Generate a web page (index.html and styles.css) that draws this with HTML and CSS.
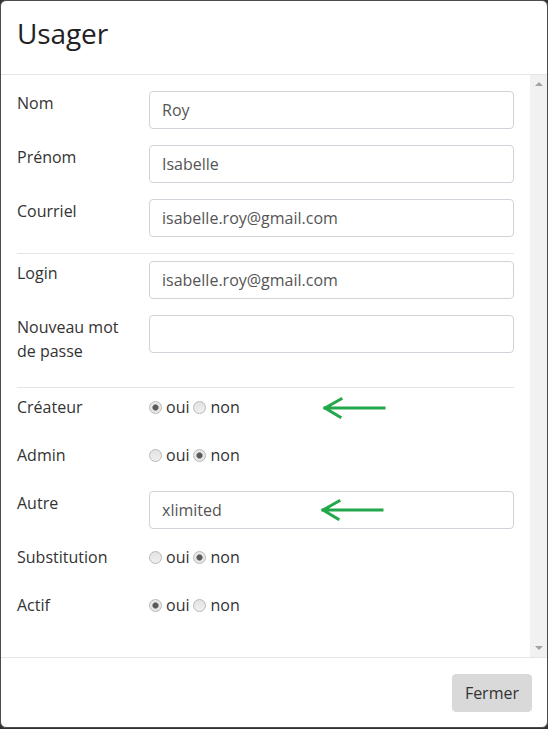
FILE: index.html
```html
<!DOCTYPE html>
<html lang="fr">
<head>
<meta charset="utf-8">
<title>Usager</title>
<link rel="stylesheet" href="styles.css">
</head>
<body>
<div class="modal">
  <div class="modal-header">
    <h4 class="modal-title">Usager</h4>
  </div>
  <div class="modal-main">
    <div class="modal-body">
      <form class="user-form">
        <div class="form-group">
          <label class="form-label">Nom</label>
          <input class="form-control" type="text" value="Roy">
        </div>
        <div class="form-group">
          <label class="form-label">Prénom</label>
          <input class="form-control" type="text" value="Isabelle">
        </div>
        <div class="form-group">
          <label class="form-label">Courriel</label>
          <input class="form-control" type="text" value="isabelle.roy@gmail.com">
        </div>
        <hr class="sep">
        <div class="form-group">
          <label class="form-label">Login</label>
          <input class="form-control" type="text" value="isabelle.roy@gmail.com">
        </div>
        <div class="form-group">
          <label class="form-label">Nouveau mot de passe</label>
          <input class="form-control" type="password" value="">
        </div>
        <hr class="sep sep-wide">
        <div class="form-group radio-row">
          <span class="form-label">Créateur</span>
          <div class="radios">
            <input class="radio" type="radio" name="createur" checked><span class="radio-text">oui</span>
            <input class="radio" type="radio" name="createur"><span class="radio-text">non</span>
          </div>
        </div>
        <div class="form-group radio-row">
          <span class="form-label">Admin</span>
          <div class="radios">
            <input class="radio" type="radio" name="admin"><span class="radio-text">oui</span>
            <input class="radio" type="radio" name="admin" checked><span class="radio-text">non</span>
          </div>
        </div>
        <div class="form-group">
          <label class="form-label">Autre</label>
          <input class="form-control" type="text" value="xlimited">
        </div>
        <div class="form-group radio-row">
          <span class="form-label">Substitution</span>
          <div class="radios">
            <input class="radio" type="radio" name="subst"><span class="radio-text">oui</span>
            <input class="radio" type="radio" name="subst" checked><span class="radio-text">non</span>
          </div>
        </div>
        <div class="form-group radio-row">
          <span class="form-label">Actif</span>
          <div class="radios">
            <input class="radio" type="radio" name="actif" checked><span class="radio-text">oui</span>
            <input class="radio" type="radio" name="actif"><span class="radio-text">non</span>
          </div>
        </div>
      </form>
    </div>
    <div class="scrollbar" aria-hidden="true">
      <span class="scroll-btn"><svg width="8" height="5" viewBox="0 0 8 5"><path d="M0 5 L4 1 L8 5 Z" fill="#a3a3a3"/></svg></span>
      <span class="scroll-btn"><svg width="8" height="5" viewBox="0 0 8 5"><path d="M0 0 L8 0 L4 4 Z" fill="#a3a3a3"/></svg></span>
    </div>
  </div>
  <div class="modal-footer">
    <button class="btn" type="button">Fermer</button>
  </div>
  <svg class="annot annot-1" width="64" height="22" viewBox="0 0 64 22">
    <path d="M3 11 H62 M3 11 L19 2 M3 11 L18 20" fill="none" stroke="#22a84a" stroke-width="3" stroke-linecap="square"/>
  </svg>
  <svg class="annot annot-2" width="64" height="22" viewBox="0 0 64 22">
    <path d="M3 11 H62 M3 11 L19 2 M3 11 L18 20" fill="none" stroke="#22a84a" stroke-width="3" stroke-linecap="square"/>
  </svg>
</div>
</body>
</html>
```

FILE: styles.css
```css
* {
  box-sizing: border-box;
}

html, body {
  margin: 0;
  padding: 0;
}

body {
  background: #2f3133;
  font-family: "Open Sans", "Liberation Sans", sans-serif;
  font-size: 16px;
  line-height: 24px;
  color: #333;
  width: 548px;
  height: 729px;
  overflow: hidden;
}

.modal {
  position: relative;
  width: 548px;
  height: 728px;
  background: #fff;
  border: 1px solid #4a4b4c;
  border-radius: 6px;
  display: flex;
  flex-direction: column;
  overflow: hidden;
}

.modal-header {
  flex: none;
  height: 74px;
  padding: 11px 16px 0;
  border-bottom: 1px solid #e5e5e5;
}

.modal-title {
  margin: 0;
  font-size: 28px;
  line-height: 42px;
  font-weight: 400;
  color: #222;
  letter-spacing: -0.1px;
}

.modal-main {
  flex: 1;
  min-height: 0;
  display: flex;
}

.modal-body {
  flex: 1;
  min-width: 0;
  overflow: hidden;
  padding: 16px 16px 16px 16px;
}

.scrollbar {
  flex: none;
  width: 17px;
  background: #f1f1f1;
  display: flex;
  flex-direction: column;
  justify-content: space-between;
}

.scroll-btn {
  height: 17px;
  display: flex;
  align-items: center;
  justify-content: center;
}

.scroll-btn svg {
  display: block;
}

.user-form {
  margin: 0;
}

.form-group {
  display: flex;
  align-items: flex-start;
  margin-bottom: 16px;
}

.form-label {
  flex: none;
  width: 132px;
  padding-right: 15px;
  display: block;
  line-height: 24px;
  color: #333;
}

.form-control {
  flex: 1;
  min-width: 0;
  height: 38px;
  padding: 6px 12px;
  font-family: inherit;
  font-size: 16px;
  line-height: 24px;
  color: #555;
  background: #fff;
  border: 1px solid #ced4da;
  border-radius: 4px;
  outline: none;
}

.sep {
  margin: 0 0 7px;
  border: 0;
  border-top: 1px solid #e5e5e5;
  height: 0;
}

.sep-wide {
  margin-top: 24px;
}

.radio-row {
  min-height: 32px;
}

.radios {
  display: flex;
  align-items: center;
  height: 24px;
}

.radio {
  appearance: none;
  -webkit-appearance: none;
  width: 13px;
  height: 13px;
  margin: 0 4px 0 0;
  border-radius: 50%;
  border: 1px solid #b8b8b8;
  background: linear-gradient(#e2e2e2, #f0f0f0);
  flex: none;
}

.radio:checked {
  background: radial-gradient(circle, #5a5a5a 0, #5a5a5a 2.4px, #9a9a9a 3px, #e6e6e6 3.6px, #ececec 100%);
}

.radio-text {
  margin-right: 4px;
  color: #333;
}

.modal-footer {
  flex: none;
  height: 70px;
  border-top: 1px solid #e5e5e5;
  padding: 16px 15px 15px;
  display: flex;
  justify-content: flex-end;
  align-items: flex-start;
}

.btn {
  height: 38px;
  padding: 6px 12px;
  font-family: inherit;
  font-size: 16px;
  line-height: 24px;
  color: #333;
  background: #d9d9d9;
  border: 1px solid #d9d9d9;
  border-radius: 4px;
}

.annot {
  position: absolute;
  display: block;
}

.annot-1 {
  left: 321px;
  top: 396px;
}

.annot-2 {
  left: 319px;
  top: 498px;
}
```
